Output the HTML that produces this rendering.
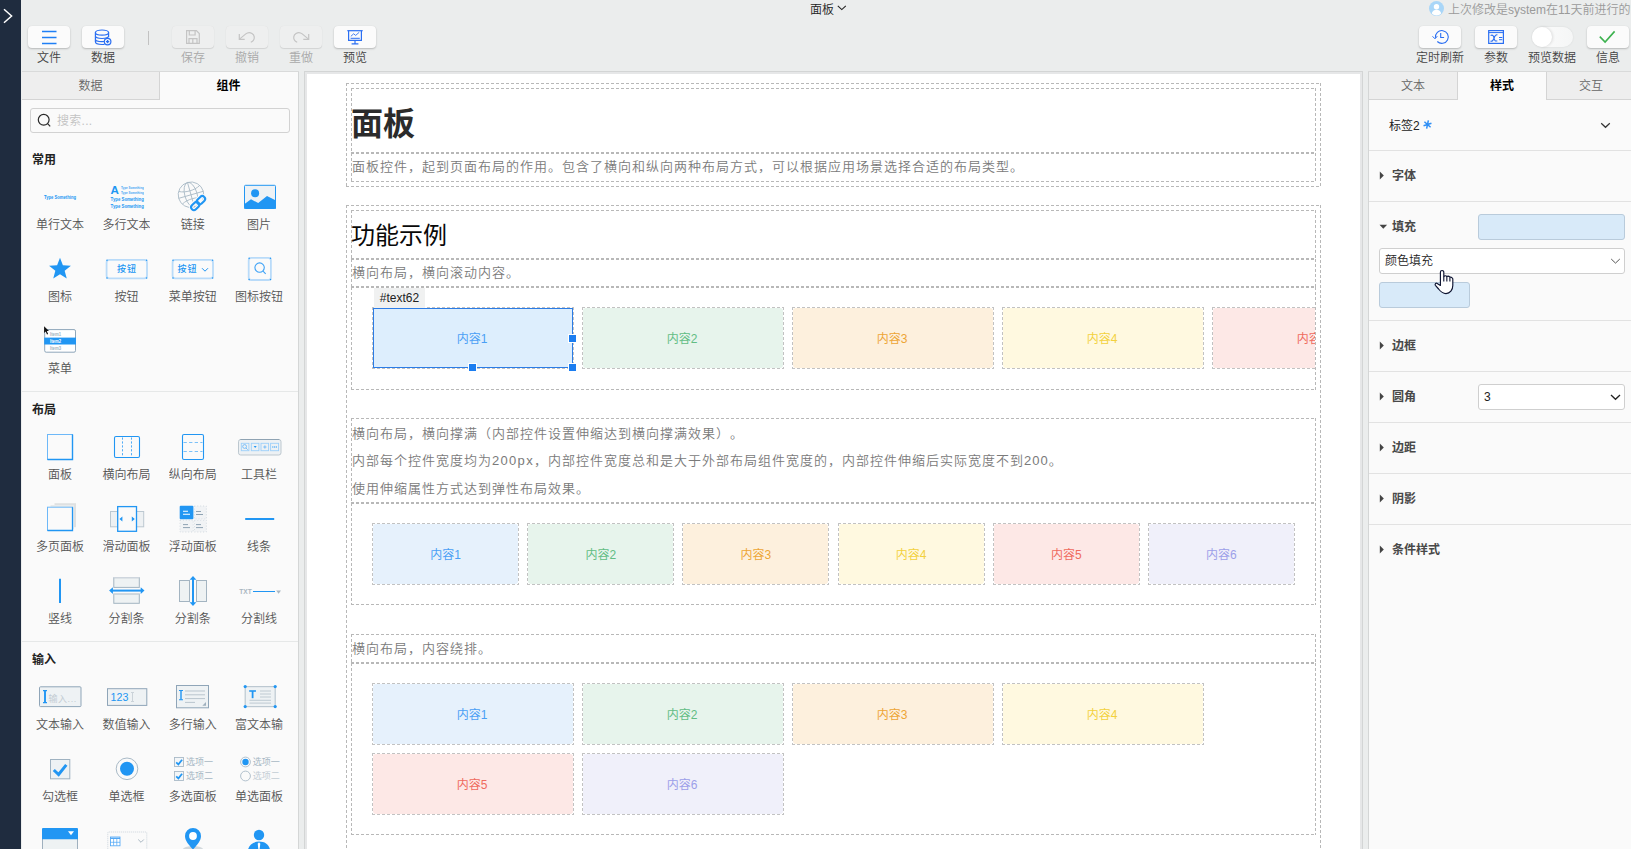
<!DOCTYPE html>
<html lang="zh-CN">
<head>
<meta charset="utf-8">
<title>面板</title>
<style>
*{box-sizing:border-box}
html,body{margin:0;padding:0}
body{width:1631px;height:849px;overflow:hidden;position:relative;background:#ebeded;
 font-family:"Liberation Sans","Noto Sans CJK SC",sans-serif;font-size:12px;line-height:16px;color:#333;text-spacing-trim:space-all;font-weight:350}
.a{position:absolute}
svg{display:block;overflow:visible;font-weight:400}
/* sidebar */
#side{left:0;top:0;width:21px;height:849px;background:#1f2c3f}
/* toolbar buttons */
.tb{position:absolute;top:26px;width:42px;height:22px;border-radius:4px;background:#fbfbfb;box-shadow:0 1px 2px rgba(0,0,0,.22),0 0 1px rgba(0,0,0,.08)}
.tb.dis{background:#eeefef;box-shadow:0 1px 1px rgba(0,0,0,.10),0 0 1px rgba(0,0,0,.08)}
.tl{position:absolute;top:50px;width:80px;height:16px;line-height:16px;text-align:center;color:#444;white-space:nowrap}
.tl.dis{color:#a9a9a9}
/* panels */
#left{left:22px;top:72px;width:277px;height:777px;background:#fafafa;border-right:1px solid #d4d6d6}
#right{left:1368px;top:72px;width:263px;height:777px;background:#fafafa;border-left:1px solid #d4d6d6}
.tab{position:absolute;top:0;height:28px;line-height:29px;text-align:center;color:#666;background:#eeeeee;border-bottom:1px solid #d4d4d4}
.tab.on{background:#fafafa;color:#000;font-weight:bold;border-bottom:none}
.sec{position:absolute;left:10px;font-weight:bold;color:#222;height:16px;line-height:16px}
.hr{position:absolute;left:0;width:276px;height:1px;background:#e6e8e8}
.it{position:absolute;width:48px;height:16px;line-height:16px;text-align:center;color:#555;white-space:nowrap;overflow:hidden}
.ic{position:absolute;width:52px;height:40px}
/* canvas */
#cv{left:304px;top:71px;width:1059px;height:790px;background:#fff;border:3px solid #e6e7e8}
#cv::before{content:"";position:absolute;left:-3px;top:-3px;right:-3px;bottom:-3px;border:1px solid #d3d5d5;pointer-events:none}
.d{position:absolute;background:
 repeating-linear-gradient(90deg,#b8b8b8 0 3px,transparent 3px 5px) 0 0/100% 1px no-repeat,
 repeating-linear-gradient(90deg,#b8b8b8 0 3px,transparent 3px 5px) 0 100%/100% 1px no-repeat,
 repeating-linear-gradient(180deg,#b8b8b8 0 3px,transparent 3px 5px) 0 0/1px 100% no-repeat,
 repeating-linear-gradient(180deg,#b8b8b8 0 3px,transparent 3px 5px) 100% 0/1px 100% no-repeat}
.g{position:absolute;color:#7a7a7a;font-size:13px;letter-spacing:1px;height:20px;line-height:20px;white-space:nowrap}
.bx{position:absolute;padding-right:2px;text-align:center;font-size:12px;font-weight:400;border-radius:3px;white-space:nowrap}
.bx::before{content:"";position:absolute;left:-1px;top:-1px;right:-1px;bottom:-1px;background:
 repeating-linear-gradient(90deg,#c2c2c2 0 3px,transparent 3px 5px) 0 0/100% 1px no-repeat,
 repeating-linear-gradient(90deg,#c2c2c2 0 3px,transparent 3px 5px) 0 100%/100% 1px no-repeat,
 repeating-linear-gradient(180deg,#c2c2c2 0 3px,transparent 3px 5px) 0 0/1px 100% no-repeat,
 repeating-linear-gradient(180deg,#c2c2c2 0 3px,transparent 3px 5px) 100% 0/1px 100% no-repeat}
.h1{font-size:32px;font-weight:bold;color:#2b2b2b;line-height:44px;height:44px;white-space:nowrap}
.h2{font-size:24px;font-weight:400;color:#080808;line-height:34px;height:34px;white-space:nowrap}
/* right panel */
.rs{position:absolute;left:0;width:262px;height:1px;background:#e2e2e2}
.rl{position:absolute;left:23px;font-weight:bold;color:#484848;height:16px;line-height:16px}
.sel{position:absolute;background:#fff;border:1px solid #cfcfcf;border-radius:3px;height:26px;line-height:24px;padding-left:5px;color:#222}
</style>
</head>
<body>
<!-- SIDEBAR -->
<div id="side" class="a"><svg class="a" style="left:0;top:0" width="21" height="32"><path d="M4 9.3 L11.6 16 L4 22.7" fill="none" stroke="#fff" stroke-width="1.5"/></svg></div>

<!-- TOP TITLE -->
<div class="a" style="left:810px;top:2px;height:16px;line-height:16px;color:#222;white-space:nowrap">面板</div>
<svg class="a" style="left:837px;top:5px" width="10" height="6"><path d="M0.8 0.8 L4.8 4.6 L8.8 0.8" fill="none" stroke="#222" stroke-width="1.1"/></svg>
<svg class="a" style="left:1429px;top:1px" width="15" height="15"><circle cx="7.500" cy="7.500" r="7.500" fill="#a9d6f8"/><circle cx="7.500" cy="5.800" r="2.700" fill="#fff"/><path d="M2.800 12.600c.3-2.600 2.300-3.900 4.700-3.900s4.400 1.300 4.700 3.900c-1.300 1.200-2.900 1.900-4.700 1.900s-3.400-.7-4.700-1.900z" fill="#fff"/></svg>
<div class="a" style="left:1448px;top:2px;height:16px;line-height:16px;color:#9a9a9a;white-space:nowrap">上次修改是system在11天前进行的</div>
<div class="tb" style="left:1419px"><svg class="a" style="left:0;top:0" width="42" height="22" fill="none" stroke="#2b6ff2" stroke-width="1.100"><path d="M16.500 11.900A6.400 6.400 0 1 1 18.300 15.500"/><path d="M13.500 10.300l2.500 2.500 2.300-2.600" stroke-width="1"/><path d="M21.700 7.100v4.400h3.400"/></svg></div>
<div class="tl" style="left:1400px">定时刷新</div>
<div class="tb" style="left:1475px"><svg class="a" style="left:0;top:0" width="42" height="22" fill="none" stroke="#2b6ff2" stroke-width="1.200"><rect x="13.700" y="4.600" width="14.700" height="12.800"/><path d="M13.700 6.600h14.700" stroke-width="1"/><path d="M15.600 9.600c2.300-1.300 3 .7 3.400 2.600.4 1.900 1.200 3.600 3.300 2.500M22.400 8.900c-2-.6-2.700 1.300-3.400 3.300-.7 2-1.500 3.500-3.500 2.900" stroke-width="1.100"/><path d="M24 11.500h3.300M24 13.700h3.300" stroke-width="1"/></svg></div>
<div class="tl" style="left:1456px">参数</div>
<div class="a" style="left:1532px;top:27px;width:41px;height:20px;border-radius:10px;background:linear-gradient(90deg,#fcfcfc,#f5f6f6);box-shadow:0 0 2px rgba(0,0,0,.10)"><div class="a" style="left:0;top:0;width:20px;height:20px;border-radius:10px;background:#fff;box-shadow:1px 0 3px rgba(0,0,0,.12)"></div></div>
<div class="tl" style="left:1512px">预览数据</div>
<div class="tb" style="left:1587px"><svg class="a" style="left:0;top:0" width="42" height="22" fill="none"><path d="M12.800 10.600l5.300 5.400 9.500-10.600" stroke="#3db24f" stroke-width="1.600"/></svg></div>
<div class="tl" style="left:1568px">信息</div>


<!-- TOOLBAR -->
<div class="tb" style="left:28px"><svg class="a" style="left:0;top:0" width="42" height="22"><path d="M14 5.5h14.5M14 11.5h14.5M14 17.5h14.5" stroke="#1f7ff5" stroke-width="1.3" fill="none"/></svg></div>
<div class="tl" style="left:9px">文件</div>
<div class="tb" style="left:82px"><svg class="a" style="left:0;top:0" width="42" height="22" fill="none" stroke="#2b6ff2" stroke-width="1.2"><ellipse cx="20" cy="6.6" rx="6.6" ry="2.6"/><path d="M13.4 6.6v9.2c0 1.5 2.9 2.7 6.6 2.7 .9 0 1.700-.07 2.500-.2M26.600 6.600v4.600M13.400 9.800c0 1.500 2.900 2.700 6.600 2.700s6.600-1.200 6.600-2.700M13.400 12.900c0 1.500 2.900 2.700 6.600 2.700 .7 0 1.400-.05 2-.13"/><circle cx="25.600" cy="15.600" r="3.300" fill="#fbfbfb"/><path d="M25.600 13.900v3.400M23.900 15.600h3.400" stroke-width="1.4"/></svg></div>
<div class="tl" style="left:63px">数据</div>
<div class="a" style="left:148px;top:31px;width:1px;height:14px;background:#c2c2c2"></div>
<div class="tb dis" style="left:172px"><svg class="a" style="left:0;top:0" width="42" height="22" fill="none" stroke="#c4c4c4" stroke-width="1.2"><path d="M14.600 4.700h9.800l2.900 2.900v9.800h-12.700z"/><path d="M17.300 4.700v4.300h5.800v-4.300M17 17.400v-4.700h8v4.700M20.800 13v4"/></svg></div>
<div class="tl dis" style="left:153px">保存</div>
<div class="tb dis" style="left:226px"><svg class="a" style="left:0;top:0" width="42" height="22" fill="none" stroke="#c4c4c4" stroke-width="1.200"><path d="M13.300 7.900v5.400h5.400"/><path d="M13.500 13.100l6.300-5.200c1.700-1.400 4.200-1.700 6.200-.5 2.600 1.600 3 5.100 1.200 7.200-.7.900-1.600 1.400-2.400 1.700"/></svg></div>
<div class="tl dis" style="left:207px">撤销</div>
<div class="tb dis" style="left:280px"><svg class="a" style="left:0;top:0" width="42" height="22" fill="none" stroke="#c4c4c4" stroke-width="1.200"><g transform="translate(42,0) scale(-1,1)"><path d="M13.300 7.900v5.400h5.400"/><path d="M13.500 13.100l6.300-5.200c1.700-1.400 4.200-1.700 6.200-.5 2.600 1.600 3 5.100 1.200 7.200-.7.900-1.600 1.400-2.400 1.700"/></g></svg></div>
<div class="tl dis" style="left:261px">重做</div>
<div class="tb" style="left:334px"><svg class="a" style="left:0;top:0" width="42" height="22" fill="none" stroke="#2b6ff2" stroke-width="1.2"><path d="M13.300 4.700h15.400"/><path d="M14.600 4.700v9.600h12.800v-9.600"/><path d="M21 14.300v3.300M17.600 17.800h6.800"/><path d="M16.800 10.400l2.800-2.600 2.100 1.600 3.500-3.100" stroke-width=".9"/><path d="M16.600 12.300h9.200" stroke-width="1"/></svg></div>
<div class="tl" style="left:315px">预览</div>


<!-- LEFT PANEL -->
<div class="a" style="left:22px;top:71px;width:277px;height:1px;background:#d9dada"></div>
<div class="a" style="left:1368px;top:71px;width:263px;height:1px;background:#d9dada"></div>
<div id="left" class="a">
<div class="tab" style="left:0;width:137px">数据</div>
<div class="tab on" style="left:137px;width:138px;border-left:1px solid #d4d4d4">组件</div>
<!--LB0-->
<div class="a" style="left:8px;top:36px;width:260px;height:25px;border:1px solid #d2d2d2;border-radius:3px;background:#fafafa"></div>
<svg class="a" style="left:15px;top:41px" width="15" height="15" fill="none" stroke="#2a2a2a" stroke-width="1.2"><circle cx="6.700" cy="6.800" r="5.400"/><path d="M10.600 10.700l2.600 2.600"/></svg>
<div class="a" style="left:35px;top:41px;height:16px;line-height:16px;color:#c3c3c3;letter-spacing:.3px">搜索...</div>
<div class="sec" style="top:80px">常用</div>
<svg class="ic" style="left:12px;top:104px" width="52" height="40"><g transform="translate(-34,-176)"><text x="44" y="198.7" font-size="4.6" font-weight="bold" fill="#2196f3" textLength="32" lengthAdjust="spacingAndGlyphs" font-family="Liberation Sans,Noto Sans CJK SC,sans-serif">Type Something</text></g></svg>
<div class="it" style="left:14.0px;top:145px">单行文本</div>
<svg class="ic" style="left:78px;top:104px" width="52" height="40"><g transform="translate(-100,-176)"><g fill="#2196f3" font-family="Liberation Sans,Noto Sans CJK SC,sans-serif" font-weight="bold"><text x="110.4" y="194.3" font-size="11.6">A</text><text x="121" y="188.9" font-size="3.3" textLength="22.8" lengthAdjust="spacingAndGlyphs" opacity=".85">Type Something</text><text x="121" y="193.8" font-size="3.3" textLength="22.8" lengthAdjust="spacingAndGlyphs" opacity=".85">Type Something</text><text x="110.6" y="200.9" font-size="4.8" textLength="33.2" lengthAdjust="spacingAndGlyphs">Type Something</text><text x="110.6" y="207.8" font-size="4.8" textLength="33.2" lengthAdjust="spacingAndGlyphs">Type Something</text></g></g></svg>
<div class="it" style="left:80.4px;top:145px">多行文本</div>
<svg class="ic" style="left:145px;top:104px" width="52" height="40"><g transform="translate(-167,-176)"><g fill="none" stroke="#a6b7c4" stroke-width=".8" transform="rotate(-16 191 194.8)"><circle cx="191" cy="194.8" r="12.8"/><ellipse cx="191" cy="194.8" rx="6.2" ry="12.8"/><path d="M191 182v25.600M178.200 194.800h25.600M180.200 188.300c3.200 1.700 7 2.400 10.800 2.400s7.600-.7 10.800-2.400M180.200 201.300c3.200-1.700 7-2.400 10.800-2.400s7.600.7 10.800 2.400"/></g><g transform="translate(198.100,203.100) rotate(-45)" fill="none"><g stroke="#fafafa" stroke-width="4.400"><rect x="-8.700" y="-2.800" width="9.300" height="5.600" rx="2.800"/><rect x="-.6" y="-2.800" width="9.300" height="5.600" rx="2.800"/></g><g stroke="#2196f3" stroke-width="2.100"><rect x="-8.700" y="-2.800" width="9.300" height="5.600" rx="2.800"/><rect x="-.6" y="-2.800" width="9.300" height="5.600" rx="2.800"/></g></g></g></svg>
<div class="it" style="left:146.7px;top:145px">链接</div>
<svg class="ic" style="left:211px;top:104px" width="52" height="40"><g transform="translate(-233,-176)"><rect x="244.500" y="185.300" width="31" height="23.200" rx="1" fill="#eef2f5" stroke="#2196f3" stroke-width="1"/><circle cx="255.100" cy="193.200" r="4" fill="#2196f3"/><path d="M244.200 204.200l6.800-5 7.200 3.900 8.800-7.100 9 4.500v8.300h-31.800z" fill="#2196f3"/></g></svg>
<div class="it" style="left:213.0px;top:145px">图片</div>
<svg class="ic" style="left:12px;top:176px" width="52" height="40"><g transform="translate(-34,-248)"><polygon points="60.00,257.80 62.88,265.34 70.94,265.75 64.66,270.81 66.76,278.60 60.00,274.20 53.24,278.60 55.34,270.81 49.06,265.75 57.12,265.34" fill="#2196f3"/></g></svg>
<div class="it" style="left:14.0px;top:217px">图标</div>
<svg class="ic" style="left:78px;top:176px" width="52" height="40"><g transform="translate(-100,-248)"><rect x="106.6" y="259.8" width="40.4" height="18.5" rx="2.600" fill="none" stroke="#b9dbf9" stroke-width="1.800"/><circle cx="107.0" cy="260.2" r=".75" fill="#2196f3"/><circle cx="146.6" cy="260.2" r=".75" fill="#2196f3"/><circle cx="107.0" cy="277.9" r=".75" fill="#2196f3"/><circle cx="146.6" cy="277.9" r=".75" fill="#2196f3"/><text x="127" y="272.300" font-size="9" font-weight="500" fill="#2196f3" text-anchor="middle" letter-spacing="1" font-family="Liberation Sans,Noto Sans CJK SC,sans-serif">按钮</text></g></svg>
<div class="it" style="left:80.4px;top:217px">按钮</div>
<svg class="ic" style="left:145px;top:176px" width="52" height="40"><g transform="translate(-167,-248)"><rect x="172.6" y="259.8" width="40.4" height="18.5" rx="2.600" fill="none" stroke="#b9dbf9" stroke-width="1.800"/><circle cx="173.0" cy="260.2" r=".75" fill="#2196f3"/><circle cx="212.6" cy="260.2" r=".75" fill="#2196f3"/><circle cx="173.0" cy="277.9" r=".75" fill="#2196f3"/><circle cx="212.6" cy="277.9" r=".75" fill="#2196f3"/><text x="177.600" y="272.300" font-size="9" font-weight="500" fill="#2196f3" letter-spacing="1" font-family="Liberation Sans,Noto Sans CJK SC,sans-serif">按钮</text><path d="M202 268.200l3 3 3-3" fill="none" stroke="#2196f3" stroke-width="1"/></g></svg>
<div class="it" style="left:146.7px;top:217px">菜单按钮</div>
<svg class="ic" style="left:211px;top:176px" width="52" height="40"><g transform="translate(-233,-248)"><rect x="248.7" y="257.8" width="22.2" height="22.2" rx="2.600" fill="none" stroke="#b9dbf9" stroke-width="1.800"/><circle cx="249.1" cy="258.2" r=".75" fill="#2196f3"/><circle cx="270.5" cy="258.2" r=".75" fill="#2196f3"/><circle cx="249.1" cy="279.6" r=".75" fill="#2196f3"/><circle cx="270.5" cy="279.6" r=".75" fill="#2196f3"/><g fill="none" stroke="#3ea2f6" stroke-width="1.100"><circle cx="259.600" cy="267.600" r="4.700"/><path d="M263 271.100l2.700 2.700"/></g></g></svg>
<div class="it" style="left:213.0px;top:217px">图标按钮</div>
<svg class="ic" style="left:12px;top:248px" width="52" height="40"><g transform="translate(-34,-320)"><rect x="44.700" y="329.600" width="30.800" height="22.600" rx="1.500" fill="#fff" stroke="#8ea6ba" stroke-width="1"/><rect x="44.200" y="337.600" width="31.800" height="6.900" fill="#2196f3"/><g font-size="4.500" font-weight="bold" font-family="Liberation Sans,Noto Sans CJK SC,sans-serif"><text x="50" y="335.500" fill="#a3b3c0" textLength="11" lengthAdjust="spacingAndGlyphs">Item1</text><text x="50" y="342.700" fill="#fff" textLength="11" lengthAdjust="spacingAndGlyphs">Item2</text><text x="50" y="349.800" fill="#a3b3c0" textLength="11" lengthAdjust="spacingAndGlyphs">Item3</text></g><path d="M44.100 326.300v6.600l1.600-1.400 1.300 2.900 1.100-.5-1.300-2.800 2.200-.1z" fill="#111"/></g></svg>
<div class="it" style="left:14.0px;top:289px">菜单</div>
<div class="hr" style="top:319px"></div>
<div class="sec" style="top:330px">布局</div>
<svg class="ic" style="left:12px;top:354px" width="52" height="40"><g transform="translate(-34,-426)"><rect x="47.500" y="434.500" width="25" height="25" fill="none" stroke="#6db8f8" stroke-width="1"/><path d="M72.500 434.500v25h-25" fill="none" stroke="#2196f3" stroke-width="1.400"/></g></svg>
<div class="it" style="left:14.0px;top:395px">面板</div>
<svg class="ic" style="left:78px;top:354px" width="52" height="40"><g transform="translate(-100,-426)"><rect x="114.500" y="436.500" width="25" height="21" rx="1.500" fill="none" stroke="#2196f3" stroke-width="1.100"/><path d="M122.500 437.500v19M131.500 437.500v19" stroke="#52acf6" stroke-width="1" stroke-dasharray="2.200 1.700" fill="none"/></g></svg>
<div class="it" style="left:80.4px;top:395px">横向布局</div>
<svg class="ic" style="left:145px;top:354px" width="52" height="40"><g transform="translate(-167,-426)"><rect x="182.500" y="434.500" width="21" height="25" rx="1.500" fill="none" stroke="#2196f3" stroke-width="1.100"/><path d="M183.500 442.500h19M183.500 451.500h19" stroke="#7cc1f8" stroke-width="1" stroke-dasharray="3.300 2.300" fill="none"/></g></svg>
<div class="it" style="left:146.7px;top:395px">纵向布局</div>
<svg class="ic" style="left:211px;top:354px" width="52" height="40"><g transform="translate(-233,-426)"><rect x="238.500" y="439.500" width="42.500" height="15.500" rx="2.200" fill="#edf1f4" stroke="#bcc7cf" stroke-width="1"/><path d="M240.300 439.500h39" stroke="#8fa3b3" stroke-width="1" fill="none"/><g fill="none" stroke="#9ccffa" stroke-width=".9"><rect x="241.300" y="443.300" width="7.600" height="7.400"/><rect x="251.300" y="443.300" width="7.600" height="7.400"/><rect x="261" y="443.300" width="7.600" height="7.400"/><rect x="270.600" y="443.300" width="8" height="7.400"/></g><g fill="none" stroke="#5fb2f7" stroke-width=".8"><circle cx="244.600" cy="446.500" r="1.900"/><path d="M246 448l1.700 1.700"/><path d="M263.300 447h3.200M264.900 445.400v3.200"/></g><path d="M253.700 446l1.500 1.900 1.500-1.900z" fill="#2196f3"/><g fill="#5fb2f7"><rect x="272.200" y="446.300" width="1.200" height="1.400"/><rect x="274" y="446.300" width="1.200" height="1.400"/><rect x="275.800" y="446.300" width="1.200" height="1.400"/></g></g></svg>
<div class="it" style="left:213.0px;top:395px">工具栏</div>
<svg class="ic" style="left:12px;top:426px" width="52" height="40"><g transform="translate(-34,-498)"><rect x="54.500" y="503.200" width="21.500" height="24" fill="#dfe1e2"/><rect x="50.500" y="505" width="23.500" height="24" fill="#e9ebeb"/><rect x="47.500" y="507.200" width="25" height="23.300" fill="#fafafa" stroke="#6db8f8" stroke-width="1"/><path d="M72.500 507.200v23.300h-25" fill="none" stroke="#2196f3" stroke-width="1.300"/></g></svg>
<div class="it" style="left:14.0px;top:467px">多页面板</div>
<svg class="ic" style="left:78px;top:426px" width="52" height="40"><g transform="translate(-100,-498)"><rect x="110.500" y="511.500" width="33.200" height="15.300" fill="#eef1f3" stroke="#bcc8d1" stroke-width="1"/><rect x="117.700" y="506.600" width="18.800" height="24.700" fill="#fafafa" stroke="#2196f3" stroke-width="1.300"/><path d="M119.400 519l3-2.400v4.800zM134.800 519l-3-2.400v4.800z" fill="#2196f3"/></g></svg>
<div class="it" style="left:80.4px;top:467px">滑动面板</div>
<svg class="ic" style="left:145px;top:426px" width="52" height="40"><g transform="translate(-167,-498)"><g fill="#f1f3f5" stroke="#d3dae0" stroke-width="1" stroke-dasharray="1 1.900"><rect x="194.400" y="506" width="12" height="13"/><rect x="180" y="520.200" width="13.200" height="11.800"/><rect x="194.400" y="520.200" width="12" height="11.800"/></g><rect x="179.700" y="505.700" width="13.700" height="13.500" rx="1" fill="#2196f3"/><path d="M183 511.200h5M183 514.300h7" stroke="#fff" stroke-width="1.100" fill="none"/><path d="M196 511.500h5M196 514.500h7M183 524.600h5M183 527.600h7M196 524.600h5M196 527.600h7" stroke="#8fa3b3" stroke-width="1" fill="none"/></g></svg>
<div class="it" style="left:146.7px;top:467px">浮动面板</div>
<svg class="ic" style="left:211px;top:426px" width="52" height="40"><g transform="translate(-233,-498)"><path d="M245.200 519h29" stroke="#2196f3" stroke-width="2" fill="none"/></g></svg>
<div class="it" style="left:213.0px;top:467px">线条</div>
<svg class="ic" style="left:12px;top:498px" width="52" height="40"><g transform="translate(-34,-570)"><path d="M60 578.800v24.200" stroke="#2196f3" stroke-width="2" fill="none"/></g></svg>
<div class="it" style="left:14.0px;top:539px">竖线</div>
<svg class="ic" style="left:78px;top:498px" width="52" height="40"><g transform="translate(-100,-570)"><g fill="#eef2f3" stroke="#a3b4c1" stroke-width="1"><rect x="113.800" y="577.700" width="25.500" height="9.700"/><rect x="113.800" y="594" width="25.500" height="9.300"/></g><path d="M113.800 577.700h25.500M113.800 594h25.500" stroke="#d4dbe0" stroke-width="1" fill="none"/><path d="M112 590.600h29.600" stroke="#2196f3" stroke-width="2" fill="none"/><path d="M109.100 590.600l3.800-3.400v6.800zM144.500 590.600l-3.800-3.400v6.800z" fill="#2196f3"/></g></svg>
<div class="it" style="left:80.4px;top:539px">分割条</div>
<svg class="ic" style="left:145px;top:498px" width="52" height="40"><g transform="translate(-167,-570)"><g fill="#eef2f3" stroke="#a3b4c1" stroke-width="1"><rect x="179.500" y="580.500" width="10" height="21"/><rect x="196.500" y="580.500" width="10" height="21"/></g><path d="M193 579v24" stroke="#2196f3" stroke-width="2" fill="none"/><path d="M193 575.900l3.400 3.800h-6.800zM193 606l3.400-3.800h-6.800z" fill="#2196f3"/></g></svg>
<div class="it" style="left:146.7px;top:539px">分割条</div>
<svg class="ic" style="left:211px;top:498px" width="52" height="40"><g transform="translate(-233,-570)"><text x="239.200" y="593.900" font-size="6.400" font-weight="bold" fill="#a9b6c1" textLength="12.500" lengthAdjust="spacingAndGlyphs" font-family="Liberation Sans,Noto Sans CJK SC,sans-serif">TXT</text><path d="M253 591.500h22" stroke="#2196f3" stroke-width="1" fill="none"/><path d="M276.200 590.500h4.800l-2.400 3.300z" fill="#a9b7c2"/></g></svg>
<div class="it" style="left:213.0px;top:539px">分割线</div>
<div class="hr" style="top:569px"></div>
<div class="sec" style="top:580px">输入</div>
<svg class="ic" style="left:12px;top:604px" width="52" height="40"><g transform="translate(-34,-676)"><rect x="39.500" y="686.800" width="41.500" height="19.800" rx="1" fill="#eef2f4" stroke="#8fa5b8" stroke-width="1"/><path d="M45 690.800v11.600" stroke="#2196f3" stroke-width="1.900" fill="none"/><path d="M43 690.600h4M43 702.600h4" stroke="#2196f3" stroke-width="1.300" fill="none"/><text x="48.400" y="701.800" font-size="9" fill="#c3ccd3" letter-spacing=".6" font-family="Liberation Sans,Noto Sans CJK SC,sans-serif">输入...</text></g></svg>
<div class="it" style="left:14.0px;top:645px">文本输入</div>
<svg class="ic" style="left:78px;top:604px" width="52" height="40"><g transform="translate(-100,-676)"><rect x="107.500" y="688.700" width="39.300" height="16.700" fill="#eef2f4" stroke="#8fa5b8" stroke-width="1"/><text x="110.600" y="700.700" font-size="10" fill="#2196f3" textLength="17.800" lengthAdjust="spacingAndGlyphs" font-family="Liberation Sans,Noto Sans CJK SC,sans-serif">123</text><path d="M132.500 692.500v9M131 692.500h3M131 701.500h3" stroke="#cbd3d9" stroke-width="1" fill="none"/></g></svg>
<div class="it" style="left:80.4px;top:645px">数值输入</div>
<svg class="ic" style="left:145px;top:604px" width="52" height="40"><g transform="translate(-167,-676)"><rect x="176.500" y="685.500" width="32" height="22.300" fill="#eef2f4" stroke="#8fa5b8" stroke-width="1"/><path d="M181 690.700v9" stroke="#2196f3" stroke-width="1.400" fill="none"/><path d="M179 690.500h4M179 699.700h4" stroke="#2196f3" stroke-width="1.100" fill="none"/><path d="M185 691h20M185 694.800h20M185 698.600h20M185 702.400h10" stroke="#b9c5ce" stroke-width="1" fill="none"/><path d="M206 702v3.700h-3.700z" fill="#9fb0be"/></g></svg>
<div class="it" style="left:146.7px;top:645px">多行输入</div>
<svg class="ic" style="left:211px;top:604px" width="52" height="40"><g transform="translate(-233,-676)"><rect x="245.200" y="686.600" width="30" height="20" fill="#eef2f4" stroke="#bcc8d1" stroke-width="1.200"/><g fill="#2196f3"><circle cx="245.200" cy="686.600" r="1.600"/><circle cx="275.200" cy="686.600" r="1.600"/><circle cx="245.200" cy="706.600" r="1.600"/><circle cx="275.200" cy="706.600" r="1.600"/></g><path d="M249.200 691h6.800" stroke="#2196f3" stroke-width="1.600" fill="none"/><path d="M252.600 691v7.200" stroke="#2196f3" stroke-width="1.800" fill="none"/><path d="M260 691h11M260 694h11M260 697h11M249.500 700.300h21.500M249.500 703.100h21.500" stroke="#b9c5ce" stroke-width=".9" fill="none"/></g></svg>
<div class="it" style="left:213.0px;top:645px">富文本输入</div>
<svg class="ic" style="left:12px;top:676px" width="52" height="40"><g transform="translate(-34,-748)"><rect x="50.500" y="759.500" width="19.300" height="19.300" fill="#eef2f4" stroke="#9fb2c1" stroke-width="1"/><path d="M53.800 770l4.800 4.500 7.700-9.600" stroke="#2196f3" stroke-width="3" fill="none"/></g></svg>
<div class="it" style="left:14.0px;top:717px">勾选框</div>
<svg class="ic" style="left:78px;top:676px" width="52" height="40"><g transform="translate(-100,-748)"><circle cx="127" cy="768.800" r="10.800" fill="#fafafa" stroke="#9fb2c1" stroke-width=".9"/><circle cx="127" cy="768.800" r="7" fill="#2196f3"/></g></svg>
<div class="it" style="left:80.4px;top:717px">单选框</div>
<svg class="ic" style="left:145px;top:676px" width="52" height="40"><g transform="translate(-167,-748)"><g fill="#f3f6f8" stroke="#a9bac7" stroke-width=".9"><rect x="174.500" y="757.500" width="9" height="9"/><rect x="174.500" y="771.500" width="9" height="9"/></g><path d="M176.200 762.300l2.200 2.100 3.700-4.700M176.200 776.300l2.200 2.100 3.700-4.700" stroke="#2196f3" stroke-width="1.700" fill="none"/><g font-size="9" fill="#a6b7c4" font-family="Liberation Sans,Noto Sans CJK SC,sans-serif"><text x="186" y="765.400">选项一</text><text x="186" y="779.400">选项二</text></g></g></svg>
<div class="it" style="left:146.7px;top:717px">多选面板</div>
<svg class="ic" style="left:211px;top:676px" width="52" height="40"><g transform="translate(-233,-748)"><g fill="#fafafa" stroke="#a9bac7" stroke-width=".9"><circle cx="245.500" cy="762" r="4.900"/><circle cx="245.500" cy="776" r="4.900"/></g><circle cx="245.500" cy="762" r="3.200" fill="#2196f3"/><g font-size="9" fill="#a6b7c4" font-family="Liberation Sans,Noto Sans CJK SC,sans-serif"><text x="252.800" y="765.400">选项一</text><text x="252.800" y="779.400" fill="#c3cdd5">选项二</text></g></g></svg>
<div class="it" style="left:213.0px;top:717px">单选面板</div>
<svg class="ic" style="left:12px;top:748px" width="52" height="40"><g transform="translate(-34,-820)"><rect x="42.500" y="838" width="35" height="16" fill="#eef2f3" stroke="#9fb0be" stroke-width="1"/><path d="M42 839.300v-10.300a1 1 0 0 1 1-1h34a1 1 0 0 1 1 1v10.300z" fill="#2196f3"/><path d="M68 831.200h6l-3 4z" fill="#fff"/></g></svg>
<svg class="ic" style="left:78px;top:748px" width="52" height="40"><g transform="translate(-100,-820)"><rect x="107.800" y="832" width="39" height="20" rx="1" fill="#fafafa" stroke="#ccd5dc" stroke-width="1" stroke-dasharray="1 1"/><rect x="110.500" y="837" width="9.500" height="8.800" fill="#fff" stroke="#4aa4f5" stroke-width=".8"/><path d="M110.500 838.300h9.500" stroke="#4aa4f5" stroke-width="1.300" fill="none"/><path d="M113.600 839v6.500M116.800 839v6.500M110.500 842.300h9.500" stroke="#4aa4f5" stroke-width=".7" fill="none"/><path d="M138.200 839.500l2.800 2.800 2.800-2.800" stroke="#a9b7c2" stroke-width="1" fill="none"/></g></svg>
<svg class="ic" style="left:145px;top:748px" width="52" height="40"><g transform="translate(-167,-820)"><ellipse cx="193" cy="849" rx="10" ry="3" fill="#d3d9dd"/><path d="M193 849.500c-4-4.500-8-8.500-8-13.500a8 8 0 0 1 16 0c0 5-4 9-8 13.500z" fill="#2196f3"/><circle cx="193" cy="836" r="3.900" fill="#fff"/></g></svg>
<svg class="ic" style="left:211px;top:748px" width="52" height="40"><g transform="translate(-233,-820)"><circle cx="259" cy="835" r="5.200" fill="#2196f3"/><path d="M247.500 853c.3-7 4.300-11.400 11.500-11.400s11.200 4.400 11.500 11.400z" fill="#2196f3"/><path d="M259 842.300l1.300 1.500-.7 5.700h-1.200l-.7-5.700z" fill="#fff"/></g></svg>
<!--LB1-->
</div>

<!-- CANVAS -->
<div id="cv" class="a">
<!--CV0-->
<div class="d" style="left:39px;top:9px;width:975px;height:104px"></div>
<div class="d" style="left:44px;top:14px;width:965px;height:65px"></div>
<div class="d" style="left:44px;top:79px;width:965px;height:29px"></div>
<div class="a h1" style="left:44px;top:28px">面板</div>
<div class="g" style="left:45px;top:83px">面板控件，起到页面布局的作用。包含了横向和纵向两种布局方式，可以根据应用场景选择合适的布局类型。</div>
<div class="d" style="left:39px;top:131px;width:975px;height:696px"></div>
<div class="d" style="left:44px;top:136px;width:965px;height:49px"></div>
<div class="a h2" style="left:44px;top:145px">功能示例</div>
<div class="d" style="left:44px;top:185px;width:965px;height:28px"></div>
<div class="g" style="left:45px;top:189px">横向布局，横向滚动内容。</div>
<div class="d" style="left:44px;top:213px;width:965px;height:103px;overflow:hidden"></div>
<div class="d" style="left:44px;top:344px;width:965px;height:85px"></div>
<div class="g" style="left:45px;top:350px">横向布局，横向撑满（内部控件设置伸缩达到横向撑满效果）。</div>
<div class="g" style="left:45px;top:377px">内部每个控件宽度均为<span style="letter-spacing:1.3px">200px</span>，内部控件宽度总和是大于外部布局组件宽度的，内部控件伸缩后实际宽度不到200。</div>
<div class="g" style="left:45px;top:405px">使用伸缩属性方式达到弹性布局效果。</div>
<div class="d" style="left:44px;top:429px;width:965px;height:102px"></div>
<div class="d" style="left:44px;top:560px;width:965px;height:29px"></div>
<div class="g" style="left:45px;top:565px">横向布局，内容绕排。</div>
<div class="d" style="left:44px;top:589px;width:965px;height:172px"></div>
<div class="a" style="left:45px;top:214px;width:963px;height:101px;overflow:hidden">
<div class="bx" style="left:21.00px;top:20px;width:200.00px;height:60px;line-height:63px;background:#ddeefd;color:#4a9ff5">内容1</div>
<div class="bx" style="left:231.00px;top:20px;width:200.00px;height:60px;line-height:63px;background:#e7f4ec;color:#62bd84">内容2</div>
<div class="bx" style="left:441.00px;top:20px;width:200.00px;height:60px;line-height:63px;background:#fdf0dd;color:#eda535">内容3</div>
<div class="bx" style="left:651.00px;top:20px;width:200.00px;height:60px;line-height:63px;background:#fff9e0;color:#f3d13d">内容4</div>
<div class="bx" style="left:861.00px;top:20px;width:200.00px;height:60px;line-height:63px;background:#fde8e6;color:#ef6a5e">内容5</div>
</div>
<div class="a" style="left:67px;top:214px;width:51px;height:20px;background:#f0f1f1;color:#222;line-height:20px;text-align:center;font-size:12px;font-weight:400">#text62</div>
<div class="a" style="left:66px;top:234px;width:200px;height:60px;border:1px solid #2b7ce6"></div>
<div class="a" style="left:261px;top:260px;width:9px;height:9px;background:#1b7df0;border:1px solid #fff"></div>
<div class="a" style="left:161px;top:289px;width:9px;height:9px;background:#1b7df0;border:1px solid #fff"></div>
<div class="a" style="left:261px;top:289px;width:9px;height:9px;background:#1b7df0;border:1px solid #fff"></div>
<div class="bx" style="left:66.00px;top:450px;width:145.17px;height:60px;line-height:63px;background:#e6f1fc;color:#4a9ff5;padding-right:0">内容1</div>
<div class="bx" style="left:221.17px;top:450px;width:145.17px;height:60px;line-height:63px;background:#e7f4ec;color:#62bd84;padding-right:0">内容2</div>
<div class="bx" style="left:376.34px;top:450px;width:145.17px;height:60px;line-height:63px;background:#fdf0dd;color:#eda535;padding-right:0">内容3</div>
<div class="bx" style="left:531.51px;top:450px;width:145.17px;height:60px;line-height:63px;background:#fff9e0;color:#f3d13d;padding-right:0">内容4</div>
<div class="bx" style="left:686.68px;top:450px;width:145.17px;height:60px;line-height:63px;background:#fde8e6;color:#ef6a5e;padding-right:0">内容5</div>
<div class="bx" style="left:841.85px;top:450px;width:145.17px;height:60px;line-height:63px;background:#f0f0fa;color:#9c9fe9;padding-right:0">内容6</div>
<div class="bx" style="left:66.00px;top:610px;width:200.00px;height:60px;line-height:63px;background:#e6f1fc;color:#4a9ff5">内容1</div>
<div class="bx" style="left:276.00px;top:610px;width:200.00px;height:60px;line-height:63px;background:#e7f4ec;color:#62bd84">内容2</div>
<div class="bx" style="left:486.00px;top:610px;width:200.00px;height:60px;line-height:63px;background:#fdf0dd;color:#eda535">内容3</div>
<div class="bx" style="left:696.00px;top:610px;width:200.00px;height:60px;line-height:63px;background:#fff9e0;color:#f3d13d">内容4</div>
<div class="bx" style="left:66.00px;top:680px;width:200.00px;height:60px;line-height:63px;background:#fde8e6;color:#ef6a5e">内容5</div>
<div class="bx" style="left:276.00px;top:680px;width:200.00px;height:60px;line-height:63px;background:#f0f0fa;color:#9c9fe9">内容6</div>
<!--CV1-->
</div>

<!-- RIGHT PANEL -->
<div id="right" class="a">
<!--RB0-->
<div class="tab" style="left:0;width:88px">文本</div>
<div class="tab on" style="left:88px;width:90px;border-left:1px solid #d4d4d4;border-right:1px solid #d4d4d4">样式</div>
<div class="tab" style="left:178px;width:88px">交互</div>
<div class="a" style="left:20px;top:46px;height:16px;line-height:16px;color:#222;font-weight:400;white-space:nowrap">标签2</div>
<svg class="a" style="left:54px;top:48px" width="10" height="10"><path d="M4.500 .3v8.400M.9 2.400l7.200 4.200M8.100 2.400l-7.200 4.200" stroke="#2f8ff5" stroke-width="1.500" fill="none" transform="rotate(12 4.5 4.5)"/></svg>
<svg class="a" style="left:231px;top:50px" width="12" height="8"><path d="M1.200 1.200l4.300 4.100 4.300-4.100" stroke="#333" stroke-width="1.200" fill="none"/></svg>
<div class="rs" style="top:78px"></div>
<svg class="a" style="left:10px;top:99px" width="6" height="9"><path d="M.8 .5l4 4-4 4z" fill="#444"/></svg>
<div class="rl" style="top:96px">字体</div>
<div class="rs" style="top:129px"></div>
<svg class="a" style="left:10px;top:152px" width="9" height="6"><path d="M.5 .8l3.800 4 3.800-4z" fill="#444"/></svg>
<div class="rl" style="top:147px">填充</div>
<div class="a" style="left:109px;top:142px;width:147px;height:26px;border:1px solid #b9cbdb;border-radius:3px;background:#d8eaf9"></div>
<div class="sel" style="left:10px;top:176px;width:246px">颜色填充</div>
<svg class="a" style="left:241px;top:186px" width="12" height="8"><path d="M1.200 1l4.300 4.100 4.300-4.100" stroke="#555" stroke-width="1" fill="none"/></svg>
<div class="a" style="left:10px;top:210px;width:91px;height:26px;border:1px solid #b9cbdb;border-radius:3px;background:#d8eaf9"></div>
<div class="rs" style="top:248px"></div>
<svg class="a" style="left:10px;top:269px" width="6" height="9"><path d="M.8 .5l4 4-4 4z" fill="#444"/></svg>
<div class="rl" style="top:266px">边框</div>
<div class="rs" style="top:299px"></div>
<svg class="a" style="left:10px;top:320px" width="6" height="9"><path d="M.8 .5l4 4-4 4z" fill="#444"/></svg>
<div class="rl" style="top:317px">圆角</div>
<div class="sel" style="left:109px;top:312px;width:147px">3</div>
<svg class="a" style="left:241px;top:322px" width="12" height="8"><path d="M1 1l4.500 4.300 4.500-4.300" stroke="#222" stroke-width="1.300" fill="none"/></svg>
<div class="rs" style="top:350px"></div>
<svg class="a" style="left:10px;top:371px" width="6" height="9"><path d="M.8 .5l4 4-4 4z" fill="#444"/></svg>
<div class="rl" style="top:368px">边距</div>
<div class="rs" style="top:401px"></div>
<svg class="a" style="left:10px;top:422px" width="6" height="9"><path d="M.8 .5l4 4-4 4z" fill="#444"/></svg>
<div class="rl" style="top:419px">阴影</div>
<div class="rs" style="top:452px"></div>
<svg class="a" style="left:10px;top:473px" width="6" height="9"><path d="M.8 .5l4 4-4 4z" fill="#444"/></svg>
<div class="rl" style="top:470px">条件样式</div>

<!--RB1-->
</div>
<!-- hand cursor -->
<svg class="a" style="left:1430px;top:266px" width="28" height="32"><g transform="translate(-1430,-266)"><path d="M1440.400 285.400V272.200a1.700 1.700 0 0 1 3.400 0V276.600Q1445.300 274.900 1446.900 276.500Q1448.400 275.500 1449.900 277.200Q1451.600 276.700 1452.800 278.800V285.500C1452.800 290 1450 293.600 1446 293.600C1442.500 293.600 1440.500 291.500 1438.600 289L1435.400 285.300C1434.600 284.200 1435.800 282.600 1437.200 283.400Z" fill="#fff" stroke="#0c1230" stroke-width="1.150" stroke-linejoin="round"/><path d="M1443.800 276.500V281.400M1446.850 276.800V281.400M1449.900 277.500V281.400" stroke="#0c1230" stroke-width="1.100" fill="none"/></g></svg>
</body>
</html>
